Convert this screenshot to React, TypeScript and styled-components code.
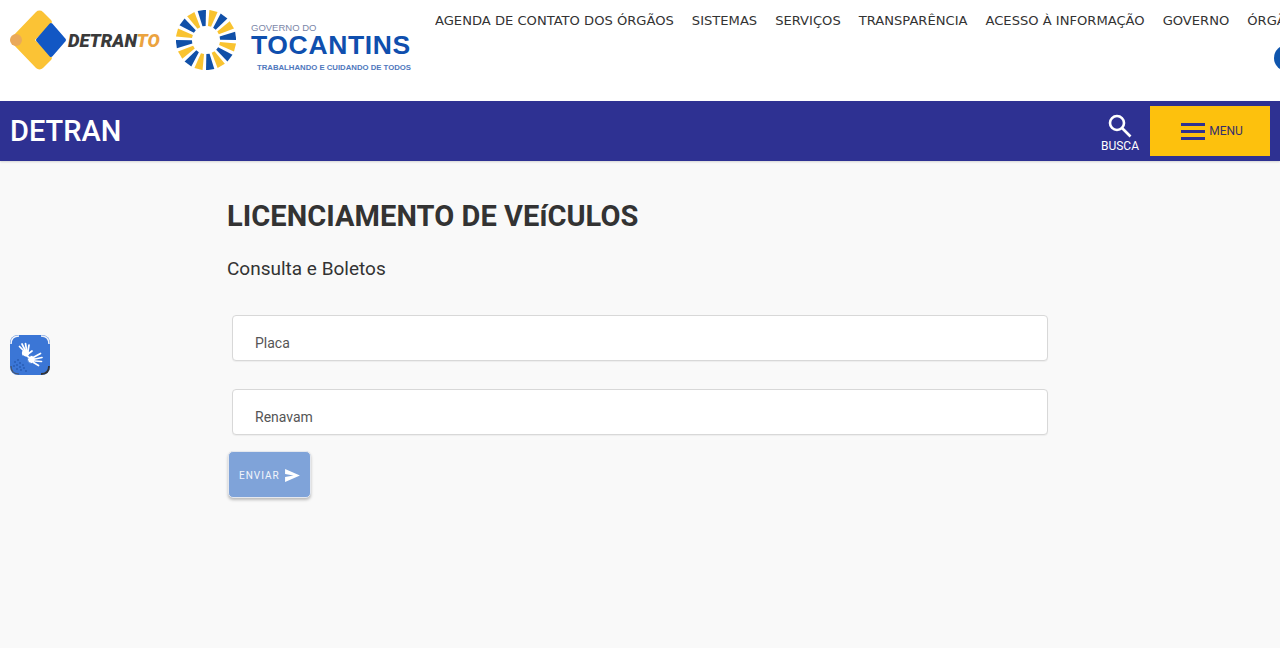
import React from "react";
import styled, { createGlobalStyle } from "styled-components";

const Global = createGlobalStyle`
  html, body { margin: 0; padding: 0; background: #f9f9f9; }
  body { font-family: Roboto, "Liberation Sans", sans-serif; overflow: hidden; }
  * { box-sizing: border-box; }
`;

const Page = styled.div`
  position: relative;
  width: 1280px;
  height: 648px;
  overflow: hidden;
  background: #f9f9f9;
`;

const TopHeader = styled.header`
  display: flex;
  height: 101px;
  background: #fff;
  overflow: hidden;
`;

const Logos = styled.div`
  display: flex;
  flex: none;
  width: 435px;
  padding: 10px 0 0 10px;
  align-items: flex-start;
`;

const DetranLogo = styled.div`
  display: flex;
  align-items: center;
  width: 166px;
  height: 60px;
`;

const DetranWord = styled.span`
  font-family: Roboto, sans-serif;
  font-size: 18.3px;
  font-weight: 900;
  font-style: italic;
  color: #3a3a3a;
  margin-left: -2px;
`;

const DetranTo = styled.span`
  color: #eba33f;
`;

const SunLogo = styled.svg`
  flex: none;
  width: 60px;
  height: 60px;
`;

const GovText = styled.div`
  display: flex;
  flex-direction: column;
  margin-left: 15px;
  width: 162px;
  padding-top: 13px;
`;

const GovSmall = styled.span`
  font-family: "Liberation Sans", sans-serif;
  font-size: 9.5px;
  line-height: 10px;
  color: #7b86a8;
`;

const GovBig = styled.span`
  font-family: "Liberation Sans", sans-serif;
  font-size: 26.5px;
  font-weight: 700;
  line-height: 24px;
  letter-spacing: 0.65px;
  color: #0f4fae;
  white-space: nowrap;
`;

const GovTag = styled.span`
  font-family: "Liberation Sans", sans-serif;
  font-size: 7.75px;
  font-weight: 700;
  line-height: 10px;
  margin: 6px 0 0 6px;
  color: #4f78bd;
  white-space: nowrap;
`;

const RightColumn = styled.div`
  flex: 1;
  min-width: 0;
  overflow: hidden;
`;

const Nav = styled.nav`
  display: flex;
  gap: 18px;
  height: 45px;
  padding-top: 12px;
  white-space: nowrap;
`;

const NavItem = styled.a`
  font-family: "DejaVu Sans", sans-serif;
  font-size: 13.1px;
  line-height: 18px;
  color: #333;
`;

const SocialDot = styled.span`
  display: block;
  width: 26px;
  height: 26px;
  margin-left: 839px;
  border-radius: 50%;
  background: #0f55ad;
`;

const BlueBar = styled.div`
  display: flex;
  align-items: center;
  justify-content: space-between;
  height: 60px;
  padding: 0 10px;
  background: #2e3192;
  box-shadow: 0 1px 2px rgba(0, 0, 0, 0.15);
`;

const BarTitle = styled.div`
  font-family: Roboto, sans-serif;
  font-size: 29px;
  font-weight: 500;
  line-height: 58px;
  color: #fff;
`;

const BarActions = styled.div`
  display: flex;
  align-items: center;
`;

const SearchButton = styled.div`
  display: flex;
  flex-direction: column;
  align-items: center;
  width: 38px;
  margin-right: 11px;
  padding-top: 3px;
  color: #fff;
  font-size: 12px;
  line-height: 14px;
`;

const MenuButton = styled.div`
  display: flex;
  align-items: center;
  justify-content: center;
  gap: 4px;
  width: 120px;
  height: 50px;
  padding: 0 0 0 4px;
  background: #fdc10d;
  color: #37306b;
  font-size: 12px;
`;

const Burger = styled.div`
  display: flex;
  flex-direction: column;
  gap: 4px;
  width: 24px;
  margin-top: 1px;
`;

const BurgerLine = styled.span`
  display: block;
  height: 3px;
  background: #2e3192;
`;

const Main = styled.main`
  padding: 36px 0 0 227px;
`;

const Title = styled.h1`
  margin: 0;
  font-family: Roboto, sans-serif;
  font-size: 29px;
  font-weight: 700;
  line-height: 38px;
  letter-spacing: 0.06px;
  color: #333;
`;

const Subtitle = styled.h2`
  margin: 20px 0 0;
  font-family: Roboto, sans-serif;
  font-size: 19px;
  font-weight: 400;
  line-height: 28px;
  color: #333;
`;

const Form = styled.form`
  display: flex;
  flex-direction: column;
  align-items: flex-start;
  margin-top: 32px;
`;

const Field = styled.div`
  display: flex;
  align-items: flex-end;
  width: 816px;
  height: 46px;
  margin: 0 0 28px 5px;
  padding: 0 0 8px 22px;
  background: #fff;
  border: 1px solid #d8d8d8;
  border-radius: 4px;
  box-shadow: 0 1px 1px rgba(0, 0, 0, 0.05);
  font-size: 14px;
  line-height: 17px;
  color: #555;

  &:last-of-type {
    margin-bottom: 16px;
  }
`;

const SendButton = styled.button`
  display: flex;
  align-items: center;
  gap: 5px;
  width: 83px;
  height: 47px;
  margin-left: 1px;
  padding: 1px 0 0 10px;
  border: 1px solid #e5e8ee;
  border-radius: 5px;
  background: #7fa3d9;
  box-shadow: 0 2px 3px rgba(0, 0, 0, 0.25);
  font-family: Roboto, sans-serif;
  font-size: 10px;
  letter-spacing: 1px;
  color: #f2f5fb;
`;

const SignWidget = styled.div`
  position: absolute;
  left: 10px;
  top: 335px;
  width: 40px;
  height: 40px;
  border-radius: 8px;
  background: #3b76d6;
`;

const navItems = [
  "AGENDA DE CONTATO DOS ÓRGÃOS",
  "SISTEMAS",
  "SERVIÇOS",
  "TRANSPARÊNCIA",
  "ACESSO À INFORMAÇÃO",
  "GOVERNO",
  "ÓRGÃOS",
];

const rays = Array.from({ length: 16 }, (_, i) => i);
const dots = [
  [5, 27], [8, 25], [4, 31], [7, 30], [10, 28], [7, 34], [10, 32], [13, 30], [11, 35], [14, 33], [16, 36],
];

export default function App() {
  return (
    <Page>
      <Global />
      <TopHeader>
        <Logos>
          <DetranLogo>
            <svg width="60" height="60" viewBox="0 0 60 60" style={{ flex: "none" }}>
              <path
                d="M26 2 a5 5 0 0 1 7 0 l8 8 a3 3 0 0 1 0 4 L25 30 l16 16 a3 3 0 0 1 0 4 l-8 8 a5 5 0 0 1 -7 0 L2 33 a4 4 0 0 1 0 -6 Z"
                fill="#fbc335"
              />
              <circle cx="6" cy="30" r="6" fill="#eaa95a" />
              <polygon
                points="41,15 54,30 41,45 28,30"
                fill="#1257c4"
                stroke="#1257c4"
                strokeWidth="4"
                strokeLinejoin="round"
              />
            </svg>
            <DetranWord>
              DETRAN<DetranTo>TO</DetranTo>
            </DetranWord>
          </DetranLogo>
          <SunLogo viewBox="-30 -30 60 60">
            {rays.map((i) => (
              <path
                key={i}
                d="M-1.6 -14 L1.6 -14 L4.2 -30 L-4.2 -30 Z"
                fill={i % 2 === 0 ? "#1150a8" : "#f9c330"}
                transform={`rotate(${i * 22.5 - 8})`}
              />
            ))}
          </SunLogo>
          <GovText>
            <GovSmall>GOVERNO DO</GovSmall>
            <GovBig>TOCANTINS</GovBig>
            <GovTag>TRABALHANDO E CUIDANDO DE TODOS</GovTag>
          </GovText>
        </Logos>
        <RightColumn>
          <Nav>
            {navItems.map((t) => (
              <NavItem key={t}>{t}</NavItem>
            ))}
          </Nav>
          <SocialDot />
        </RightColumn>
      </TopHeader>
      <BlueBar>
        <BarTitle>DETRAN</BarTitle>
        <BarActions>
          <SearchButton>
            <svg width="26" height="26" viewBox="0 0 26 26" fill="none" stroke="#fff" strokeWidth="2.6">
              <circle cx="10" cy="10" r="7" />
              <path d="M15 15 L23.5 23.5" />
            </svg>
            BUSCA
          </SearchButton>
          <MenuButton>
            <Burger>
              <BurgerLine />
              <BurgerLine />
              <BurgerLine />
            </Burger>
            MENU
          </MenuButton>
        </BarActions>
      </BlueBar>
      <Main>
        <Title>LICENCIAMENTO DE VEíCULOS</Title>
        <Subtitle>Consulta e Boletos</Subtitle>
        <Form>
          <Field>Placa</Field>
          <Field>Renavam</Field>
          <SendButton type="button">
            ENVIAR
            <svg width="15" height="13" viewBox="0 0 16 14">
              <path d="M0 0 L16 7 L0 14 L0 8.5 L9 7 L0 5.5 Z" fill="#fff" />
            </svg>
          </SendButton>
        </Form>
      </Main>
      <SignWidget>
        <svg width="40" height="40" viewBox="0 0 40 40" fill="none">
          {dots.map(([x, y]) => (
            <circle key={`${x}-${y}`} cx={x} cy={y} r="0.8" fill="#1d4c9e" />
          ))}
          <path d="M1 9 Q1 1 9 1" stroke="#f4f6fb" strokeWidth="1.6" />
          <path d="M31 1 Q39 1 39 9" stroke="#eef1f7" strokeWidth="1.6" />
          <path d="M39 31 Q39 39 31 39" stroke="#333" strokeWidth="1.8" />
          <path d="M1 31 Q1 39 9 39" stroke="#4a5568" strokeWidth="1.2" />
          <g stroke="#fff" strokeLinecap="round">
            <g strokeWidth="1.7">
              <path d="M14 16 L9.5 11.5" />
              <path d="M15 15 L12 9" />
              <path d="M16.5 15 L15.5 8.5" />
              <path d="M18 16 L19 10" />
              <path d="M18 19 L22 16" />
            </g>
            <circle cx="15.5" cy="18" r="3.6" fill="#fff" stroke="none" />
            <path d="M13.5 21 Q15 23.5 18 23.5" stroke="#3b76d6" strokeWidth="1.2" />
            <circle cx="21.5" cy="24.5" r="4" fill="#fff" stroke="#3b76d6" strokeWidth="1" />
            <g strokeWidth="1.7">
              <path d="M24 22 L30.5 18.5" />
              <path d="M25 24 L32 22.5" />
              <path d="M25 26 L31.5 26.5" />
              <path d="M23.5 27.5 L28.5 30.5" />
              <path d="M18.5 22 L16 20" />
            </g>
          </g>
        </svg>
      </SignWidget>
    </Page>
  );
}
